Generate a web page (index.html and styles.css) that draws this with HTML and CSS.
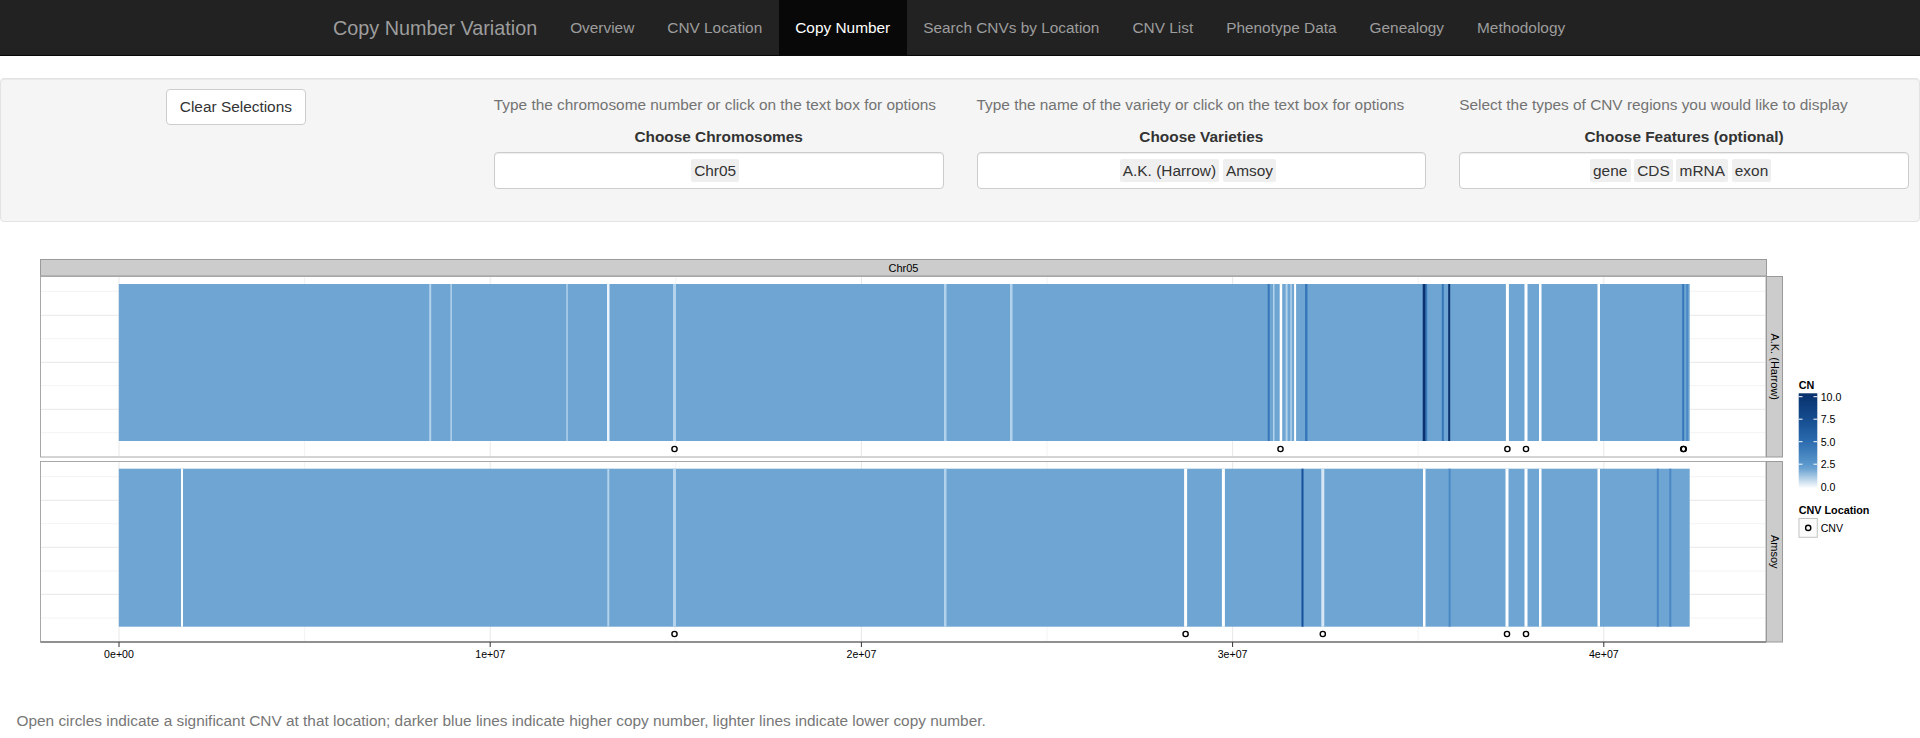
FILE: index.html
```html
<!DOCTYPE html>
<html>
<head>
<meta charset="utf-8">
<title>Copy Number Variation</title>
<link rel="stylesheet" href="styles.css">
</head>
<body>
<nav class="navbar">
  <div class="nav-inner">
    <span class="brand">Copy Number Variation</span>
    <ul class="nav">
      <li><a>Overview</a></li>
      <li><a>CNV Location</a></li>
      <li class="active"><a>Copy Number</a></li>
      <li><a>Search CNVs by Location</a></li>
      <li><a>CNV List</a></li>
      <li><a>Phenotype Data</a></li>
      <li><a>Genealogy</a></li>
      <li><a>Methodology</a></li>
    </ul>
  </div>
</nav>

<div class="well">
  <div class="col col-btn"><button class="btn">Clear Selections</button></div>
  <div class="col">
    <span class="help">Type the chromosome number or click on the text box for options</span>
    <label class="ctl-label">Choose Chromosomes</label>
    <div class="sel"><span class="item">Chr05</span></div>
  </div>
  <div class="col">
    <span class="help">Type the name of the variety or click on the text box for options</span>
    <label class="ctl-label">Choose Varieties</label>
    <div class="sel"><span class="item">A.K. (Harrow)</span><span class="item">Amsoy</span></div>
  </div>
  <div class="col">
    <span class="help">Select the types of CNV regions you would like to display</span>
    <label class="ctl-label">Choose Features (optional)</label>
    <div class="sel"><span class="item">gene</span><span class="item">CDS</span><span class="item">mRNA</span><span class="item">exon</span></div>
  </div>
</div>

<svg class="plot" width="1920" height="488" viewBox="0 222 1920 488" xmlns="http://www.w3.org/2000/svg">
  <defs>
    <linearGradient id="cngrad" x1="0" y1="1" x2="0" y2="0">
      <stop offset="0" stop-color="#ffffff"/>
      <stop offset="0.2" stop-color="#6fa5d2"/>
      <stop offset="0.25" stop-color="#5b98cd"/>
      <stop offset="0.5" stop-color="#2a6aae"/>
      <stop offset="0.75" stop-color="#134a8c"/>
      <stop offset="1" stop-color="#08306b"/>
    </linearGradient>
  </defs>

  <!-- top strip -->
  <rect class="strip" x="40.5" y="259.5" width="1726" height="16.5"/>
  <text class="strip-t" x="903.5" y="271.6" text-anchor="middle">Chr05</text>

  <!-- panel 1 -->
  <rect class="panel" x="40.5" y="276.5" width="1725.5" height="180.5"/>
  <g class="gmin">
    <line x1="41" x2="1765" y1="291.3" y2="291.3"/><line x1="41" x2="1765" y1="338.7" y2="338.7"/>
    <line x1="41" x2="1765" y1="385.7" y2="385.7"/><line x1="41" x2="1765" y1="432.7" y2="432.7"/>
    <line x1="304.6" x2="304.6" y1="277" y2="456"/><line x1="675.8" x2="675.8" y1="277" y2="456"/>
    <line x1="1047" x2="1047" y1="277" y2="456"/><line x1="1418.2" x2="1418.2" y1="277" y2="456"/>
  </g>
  <g class="gmaj">
    <line x1="41" x2="1765" y1="315.3" y2="315.3"/><line x1="41" x2="1765" y1="362.3" y2="362.3"/>
    <line x1="41" x2="1765" y1="409.3" y2="409.3"/>
    <line x1="119" x2="119" y1="277" y2="456"/><line x1="490.2" x2="490.2" y1="277" y2="456"/>
    <line x1="861.4" x2="861.4" y1="277" y2="456"/><line x1="1232.6" x2="1232.6" y1="277" y2="456"/>
    <line x1="1603.8" x2="1603.8" y1="277" y2="456"/>
  </g>
  <rect class="bar" x="118.8" y="284" width="1570.9" height="157"/>
  <g>
    <rect class="cn1" x="429.2" y="284" width="2" height="157"/>
    <rect class="cn1" x="450.4" y="284" width="1.5" height="157"/>
    <rect class="cn1" x="566.3" y="284" width="1.5" height="157"/>
    <rect class="cn0b" x="607" y="284" width="2.5" height="157"/>
    <rect class="cn1" x="673" y="284" width="3" height="157"/>
    <rect class="cn1" x="944" y="284" width="2.5" height="157"/>
    <rect class="cn1" x="1010" y="284" width="2.5" height="157"/>
    <rect class="cn4" x="1267.7" y="284" width="2" height="157"/>
    <rect class="cn1" x="1273" y="284" width="1.5" height="157"/>
    <rect class="cn0" x="1279.7" y="284" width="2.5" height="157"/>
    <rect class="cn1" x="1285.6" y="284" width="2" height="157"/>
    <rect class="cn1" x="1290.3" y="284" width="1.5" height="157"/>
    <rect class="cn0" x="1294.1" y="284" width="2" height="157"/>
    <rect class="cn4" x="1305" y="284" width="2.5" height="157"/>
    <rect class="cn9" x="1422.7" y="284" width="3" height="157"/>
    <rect class="cn4" x="1425.7" y="284" width="1.5" height="157"/>
    <rect class="cn4" x="1441.8" y="284" width="2" height="157"/>
    <rect class="cn9" x="1448.2" y="284" width="2" height="157"/>
    <rect class="cn0" x="1505.9" y="284" width="3" height="157"/>
    <rect class="cn0" x="1524.5" y="284" width="3" height="157"/>
    <rect class="cn0" x="1539" y="284" width="2.5" height="157"/>
    <rect class="cn0" x="1597.5" y="284" width="2.5" height="157"/>
    <rect class="cn4" x="1682.2" y="284" width="2" height="157"/>
    <rect class="cn3" x="1686.2" y="284" width="2" height="157"/>
  </g>
  <g class="pt">
    <circle cx="674.5" cy="449" r="2.6"/><circle cx="1280.5" cy="449" r="2.6"/>
    <circle cx="1507.4" cy="449" r="2.6"/><circle cx="1526" cy="449" r="2.6"/>
    <circle cx="1683.2" cy="449" r="2.6"/><circle cx="1683.8" cy="449" r="2.6"/>
  </g>
  <rect class="strip" x="1766.5" y="276.5" width="16" height="180.5"/>
  <text class="strip-t" transform="translate(1774.5,366.7) rotate(90)" text-anchor="middle" dy="0.35em">A.K. (Harrow)</text>

  <!-- panel 2 -->
  <rect class="panel" x="40.5" y="461.5" width="1725.5" height="180.5"/>
  <g class="gmin">
    <line x1="41" x2="1765" y1="476.7" y2="476.7"/><line x1="41" x2="1765" y1="523.7" y2="523.7"/>
    <line x1="41" x2="1765" y1="571" y2="571"/><line x1="41" x2="1765" y1="618" y2="618"/>
    <line x1="304.6" x2="304.6" y1="462" y2="641"/><line x1="675.8" x2="675.8" y1="462" y2="641"/>
    <line x1="1047" x2="1047" y1="462" y2="641"/><line x1="1418.2" x2="1418.2" y1="462" y2="641"/>
  </g>
  <g class="gmaj">
    <line x1="41" x2="1765" y1="500.3" y2="500.3"/><line x1="41" x2="1765" y1="547.3" y2="547.3"/>
    <line x1="41" x2="1765" y1="594.3" y2="594.3"/>
    <line x1="119" x2="119" y1="462" y2="641"/><line x1="490.2" x2="490.2" y1="462" y2="641"/>
    <line x1="861.4" x2="861.4" y1="462" y2="641"/><line x1="1232.6" x2="1232.6" y1="462" y2="641"/>
    <line x1="1603.8" x2="1603.8" y1="462" y2="641"/>
  </g>
  <rect class="bar" x="118.8" y="468.7" width="1570.9" height="158"/>
  <g>
    <rect class="cn0" x="181" y="468.7" width="2" height="158"/>
    <rect class="cn1" x="607.3" y="468.7" width="2" height="158"/>
    <rect class="cn1" x="673" y="468.7" width="3" height="158"/>
    <rect class="cn1" x="944" y="468.7" width="2.5" height="158"/>
    <rect class="cn0" x="1184.1" y="468.7" width="3" height="158"/>
    <rect class="cn0" x="1221.9" y="468.7" width="3" height="158"/>
    <rect class="cn7" x="1301.5" y="468.7" width="2" height="158"/>
    <rect class="cn0c" x="1321.3" y="468.7" width="3" height="158"/>
    <rect class="cn0" x="1423" y="468.7" width="2.5" height="158"/>
    <rect class="cn3" x="1448.6" y="468.7" width="2" height="158"/>
    <rect class="cn0" x="1505.5" y="468.7" width="3" height="158"/>
    <rect class="cn0" x="1524.5" y="468.7" width="3" height="158"/>
    <rect class="cn0" x="1539" y="468.7" width="2.5" height="158"/>
    <rect class="cn0" x="1597.5" y="468.7" width="2.5" height="158"/>
    <rect class="cn3" x="1656.8" y="468.7" width="2" height="158"/>
    <rect class="cn3" x="1669.3" y="468.7" width="2" height="158"/>
  </g>
  <g class="pt">
    <circle cx="674.5" cy="634" r="2.6"/><circle cx="1185.6" cy="634" r="2.6"/>
    <circle cx="1322.8" cy="634" r="2.6"/><circle cx="1507" cy="634" r="2.6"/>
    <circle cx="1526" cy="634" r="2.6"/>
  </g>
  <rect class="strip" x="1766.5" y="461.5" width="16" height="180.5"/>
  <text class="strip-t" transform="translate(1774.5,551.7) rotate(90)" text-anchor="middle" dy="0.35em">Amsoy</text>

  <!-- x axis -->
  <line class="axis" x1="40.5" x2="1766" y1="642" y2="642"/>
  <g class="tick">
    <line x1="119" x2="119" y1="642" y2="647"/><line x1="490.2" x2="490.2" y1="642" y2="647"/>
    <line x1="861.4" x2="861.4" y1="642" y2="647"/><line x1="1232.6" x2="1232.6" y1="642" y2="647"/>
    <line x1="1603.8" x2="1603.8" y1="642" y2="647"/>
  </g>
  <g class="ax" text-anchor="middle">
    <text x="119" y="658">0e+00</text>
    <text x="490.2" y="658">1e+07</text>
    <text x="861.4" y="658">2e+07</text>
    <text x="1232.6" y="658">3e+07</text>
    <text x="1603.8" y="658">4e+07</text>
  </g>

  <!-- legend -->
  <text class="lg-title" x="1798.7" y="389">CN</text>
  <rect x="1798.7" y="393.3" width="18.6" height="95" fill="url(#cngrad)"/>
  <g class="lg-tick">
    <line x1="1798.7" x2="1802.5" y1="396.7" y2="396.7"/><line x1="1813.5" x2="1817.3" y1="396.7" y2="396.7"/>
    <line x1="1798.7" x2="1802.5" y1="419.2" y2="419.2"/><line x1="1813.5" x2="1817.3" y1="419.2" y2="419.2"/>
    <line x1="1798.7" x2="1802.5" y1="441.7" y2="441.7"/><line x1="1813.5" x2="1817.3" y1="441.7" y2="441.7"/>
    <line x1="1798.7" x2="1802.5" y1="464.2" y2="464.2"/><line x1="1813.5" x2="1817.3" y1="464.2" y2="464.2"/>
  </g>
  <g class="lg-lab">
    <text x="1820.7" y="400.5">10.0</text>
    <text x="1820.7" y="422.5">7.5</text>
    <text x="1820.7" y="445.5">5.0</text>
    <text x="1820.7" y="467.5">2.5</text>
    <text x="1820.7" y="490.5">0.0</text>
  </g>
  <text class="lg-title" x="1798.7" y="514">CNV Location</text>
  <rect class="lg-key" x="1799" y="518.5" width="18.3" height="18.8"/>
  <circle class="pt" cx="1808.2" cy="527.9" r="2.6"/>
  <text class="lg-lab" x="1820.7" y="531.5">CNV</text>
</svg>

<p class="caption">Open circles indicate a significant CNV at that location; darker blue lines indicate higher copy number, lighter lines indicate lower copy number.</p>
</body>
</html>
```

FILE: styles.css
```css
* {
  box-sizing: border-box;
}

html,
body {
  margin: 0;
  padding: 0;
}

body {
  width: 1920px;
  height: 738px;
  overflow: hidden;
  background: #ffffff;
  color: #333333;
  font-family: "Liberation Sans", Arial, Helvetica, sans-serif;
  font-size: 15.4px;
  line-height: 22px;
}

/* ---------- navbar ---------- */
.navbar {
  height: 56px;
  background: #222222;
  border-bottom: 1px solid #080808;
  margin-bottom: 22px;
}

.nav-inner {
  width: 1287px;
  margin: 0 auto;
  display: flex;
}

.brand {
  height: 55px;
  padding: 16.5px;
  font-size: 19.8px;
  line-height: 22px;
  color: #9d9d9d;
}

.nav {
  display: flex;
  list-style: none;
  margin: 0;
  padding: 0;
}

.nav a {
  display: block;
  height: 55px;
  padding: 16.5px;
  line-height: 22px;
  color: #9d9d9d;
  text-decoration: none;
}

.nav .active a {
  background: #080808;
  color: #ffffff;
}

/* ---------- control well ---------- */
.well {
  height: 144px;
  margin: 0;
  padding: 10px 10px 0;
  background: #f5f5f5;
  border: 1px solid #e3e3e3;
  border-radius: 4px;
  box-shadow: inset 0 1px 1px rgba(0, 0, 0, 0.05);
  display: grid;
  grid-template-columns: repeat(4, 1fr);
  column-gap: 33px;
}

.col-btn {
  text-align: center;
}

.btn {
  height: 36px;
  padding: 6px 13.2px;
  font-family: inherit;
  font-size: 15.4px;
  line-height: 22px;
  color: #333333;
  background: #ffffff;
  border: 1px solid #cccccc;
  border-radius: 4px;
}

.help {
  display: block;
  margin-top: 5px;
  margin-bottom: 10px;
  color: #737373;
  white-space: nowrap;
}

.ctl-label {
  display: block;
  margin-bottom: 4px;
  font-weight: bold;
  text-align: center;
}

.sel {
  height: 37px;
  padding: 0 15px 0 8px;
  background: #ffffff;
  border: 1px solid #cccccc;
  border-radius: 4px;
  box-shadow: inset 0 1px 1px rgba(0, 0, 0, 0.075);
  display: flex;
  justify-content: center;
  align-items: center;
  gap: 3.3px;
}

.item {
  padding: 0 3.3px;
  line-height: 23.4px;
  background: #efefef;
  border-radius: 2px;
  color: #333333;
}

/* ---------- plot ---------- */
.plot {
  display: block;
}

.strip {
  fill: #cccccc;
  stroke: #9a9a9a;
  stroke-width: 1;
}

.strip-t {
  font-family: "Liberation Sans", Arial, sans-serif;
  font-size: 11px;
  fill: #000000;
}

.panel {
  fill: #ffffff;
  stroke: #a8a8a8;
  stroke-width: 1;
}

.gmin line {
  stroke: #f3f3f3;
  stroke-width: 1;
}

.gmaj line {
  stroke: #e8e8e8;
  stroke-width: 1;
}

.bar {
  fill: #6fa5d2;
}

.cn0 { fill: #ffffff; }
.cn0b { fill: #eaf3fb; }
.cn0c { fill: #d6e7f5; }
.cn1 { fill: #b3d2ec; }
.cn3 { fill: #4a89c5; }
.cn4 { fill: #3577b9; }
.cn7 { fill: #15509a; }
.cn9 { fill: #0a326f; }

.pt circle,
circle.pt {
  fill: none;
  stroke: #000000;
  stroke-width: 1.4;
}

.axis {
  stroke: #7a7a7a;
  stroke-width: 1.6;
}

.tick line {
  stroke: #333333;
  stroke-width: 1;
}

.ax text {
  font-family: "Liberation Sans", Arial, sans-serif;
  font-size: 10.6px;
  fill: #000000;
}

.lg-title {
  font-family: "Liberation Sans", Arial, sans-serif;
  font-size: 10.8px;
  font-weight: bold;
  fill: #000000;
}

.lg-lab,
.lg-lab text {
  font-family: "Liberation Sans", Arial, sans-serif;
  font-size: 10.6px;
  fill: #000000;
}

.lg-tick line {
  stroke: #ffffff;
  stroke-width: 1;
}

.lg-key {
  fill: #fbfbfb;
  stroke: #c4c4c4;
  stroke-width: 1;
}

/* ---------- caption ---------- */
.caption {
  margin: 0;
  padding-left: 16.5px;
  color: #777777;
  font-size: 15.4px;
  line-height: 22px;
}
```
